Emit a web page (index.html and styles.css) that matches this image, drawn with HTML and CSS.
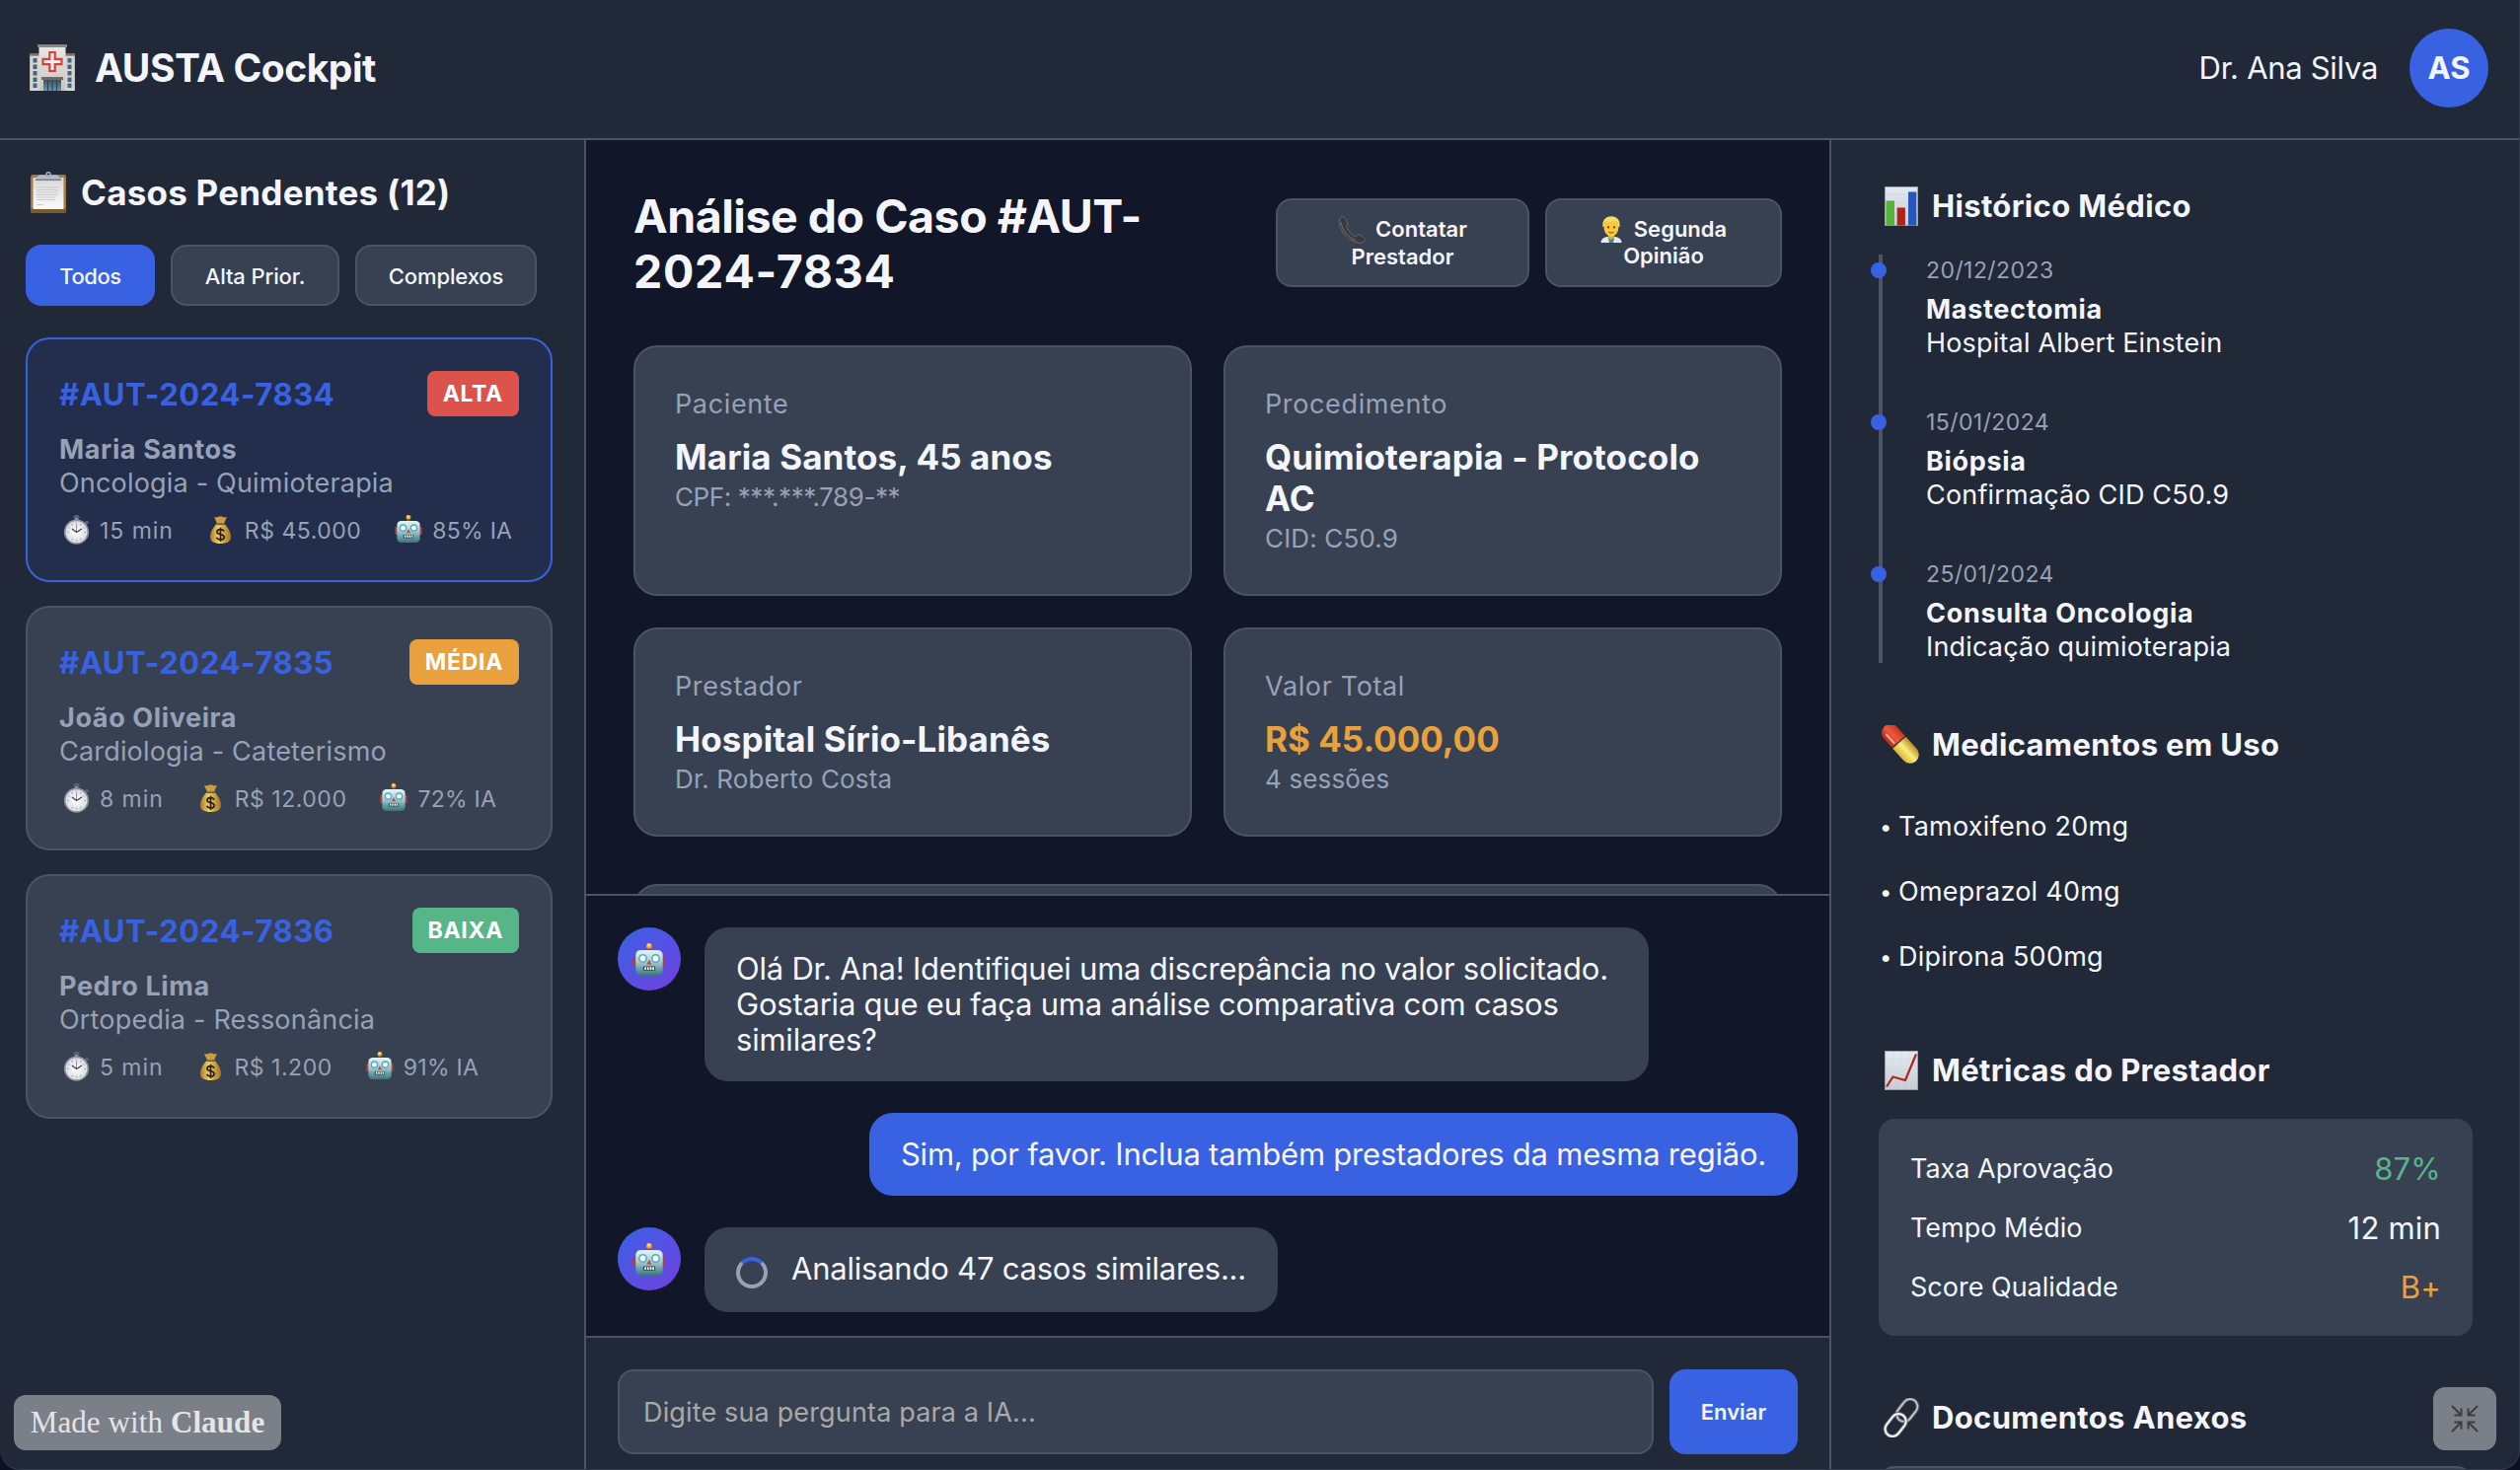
FILE: index.html
```html
<!DOCTYPE html>
<html lang="pt-BR">
<head>
<meta charset="utf-8">
<title>AUSTA Cockpit</title>
<link rel="stylesheet" href="styles.css">
</head>
<body>
<svg class="sprite" aria-hidden="true">
  <defs>
    <linearGradient id="g-wall" x1="0" y1="0" x2="0" y2="1"><stop offset="0" stop-color="#e9e7e3"/><stop offset="1" stop-color="#c9c6c1"/></linearGradient>
    <linearGradient id="g-glass" x1="0" y1="0" x2="0" y2="1"><stop offset="0" stop-color="#39536a"/><stop offset="1" stop-color="#6c93aa"/></linearGradient>
    <linearGradient id="g-paper" x1="0" y1="0" x2="0" y2="1"><stop offset="0" stop-color="#d9d9da"/><stop offset="1" stop-color="#fafafa"/></linearGradient>
    <linearGradient id="g-sheet" x1="0" y1="0" x2="0" y2="1"><stop offset="0" stop-color="#e3e9f2"/><stop offset="1" stop-color="#c6ccd2"/></linearGradient>
    <linearGradient id="g-robot" x1="0" y1="0" x2="0" y2="1"><stop offset="0" stop-color="#e6f6f5"/><stop offset=".45" stop-color="#a5cfd2"/><stop offset="1" stop-color="#37737f"/></linearGradient>
    <linearGradient id="g-gold" x1="0" y1="0" x2="1" y2="0"><stop offset="0" stop-color="#a97a24"/><stop offset=".4" stop-color="#f0cf6c"/><stop offset="1" stop-color="#a3741f"/></linearGradient>
    <linearGradient id="g-red" x1="0" y1="0" x2="1" y2="0"><stop offset="0" stop-color="#b32a17"/><stop offset=".5" stop-color="#ef5a3c"/><stop offset="1" stop-color="#c93720"/></linearGradient>
    <linearGradient id="g-yellow" x1="0" y1="0" x2="1" y2="0"><stop offset="0" stop-color="#d8b52e"/><stop offset=".5" stop-color="#fbee83"/><stop offset="1" stop-color="#b98f22"/></linearGradient>
    <radialGradient id="g-dial"><stop offset="0" stop-color="#ffffff"/><stop offset="1" stop-color="#dcdfe4"/></radialGradient>
    <radialGradient id="g-bulb" cx=".4" cy=".3"><stop offset="0" stop-color="#fff0a0"/><stop offset="1" stop-color="#e8951c"/></radialGradient>
  </defs>
  <symbol id="i-hospital" viewBox="0 0 46 47">
    <rect x="0" y="9" width="46" height="38" fill="#bdb9b2"/>
    <rect x="1" y="12" width="9" height="35" fill="#d8d5d0"/><rect x="36" y="12" width="9" height="35" fill="#d8d5d0"/>
    <rect x="0" y="9" width="46" height="2.5" fill="#77726b"/>
    <g fill="#3f6684"><rect x="3.5" y="14" width="4" height="4.5"/><rect x="3.5" y="20.5" width="4" height="4.5"/><rect x="3.5" y="27" width="4" height="4.5"/><rect x="3.5" y="33.5" width="4" height="4.5"/><rect x="3.5" y="39.5" width="4" height="4.5"/><rect x="38.5" y="14" width="4" height="4.5"/><rect x="38.5" y="20.5" width="4" height="4.5"/><rect x="38.5" y="27" width="4" height="4.5"/><rect x="38.5" y="33.5" width="4" height="4.5"/><rect x="38.5" y="39.5" width="4" height="4.5"/></g>
    <rect x="9.5" y="2" width="27" height="45" fill="url(#g-wall)"/>
    <rect x="8" y="0" width="30" height="3" fill="#8a857d"/>
    <rect x="12" y="33" width="22" height="3" fill="#6f6a63"/>
    <rect x="14" y="36" width="18" height="11" fill="url(#g-glass)"/>
    <path d="M18.500 36v11M23 36v11M27.500 36v11" stroke="#2b4252" stroke-width="1"/>
    <path d="M20.300 8h5.400v6.800h6.800v5.400h-6.800v6.800h-5.400v-6.800h-6.800v-5.400h6.800z" fill="#f1efec" stroke="#d8403d" stroke-width="2.200"/>
  </symbol>
  <symbol id="i-clipboard" viewBox="0 0 36 42">
    <rect x="0" y="3" width="36" height="39" rx="2.500" fill="#a07a42"/>
    <rect x="0" y="37" width="36" height="5" rx="2" fill="#7d5a29"/>
    <rect x="2.500" y="6" width="31" height="32" fill="url(#g-paper)"/>
    <path d="M6 16h22M6 18.500h22M6 21h22M6 23.500h22M6 26h20M6 28.500h19M6 11.500h4M6 33.500h7" stroke="#c3c3c5" stroke-width=".8"/>
    <path d="M5 8.500V6.500L9 3.500h18l4 3v2z" fill="#b6bdc6"/><path d="M5 8.300h26" stroke="#7f7f84" stroke-width="1.600"/>
    <circle cx="18" cy="2.800" r="2.100" fill="none" stroke="#9fb0c4" stroke-width="1.500"/>
  </symbol>
  <symbol id="i-stopwatch" viewBox="0 0 27 30">
    <rect x="10.500" y="0" width="6" height="5" rx="2" fill="#5a6170"/><rect x="12" y="3" width="3" height="4" fill="#868d99"/>
    <path d="M21.500 7.500l3-2 1.800 2.600-2.800 1.800z" fill="#5d6472"/>
    <circle cx="13.500" cy="17.200" r="12.600" fill="#8f959f"/>
    <circle cx="13.500" cy="17.200" r="10.900" fill="url(#g-dial)"/>
    <g stroke="#a2a7b0" stroke-width="1.100"><path d="M13.500 7.600v2M13.500 24.800v2M3.900 17.200h2M21.100 17.200h2M8.700 8.900l1 1.700M18.300 8.900l-1 1.700M5.200 12.400l1.700 1M21.800 12.400l-1.700 1M8.700 25.500l1-1.700M18.300 25.500l-1-1.700"/></g>
    <path d="M13.500 17.200V10" stroke="#d7755f" stroke-width="1"/>
    <path d="M9 14l4.500 3.500 5.500-3.500" fill="none" stroke="#3c4049" stroke-width="1.200"/>
  </symbol>
  <symbol id="i-bag" viewBox="0 0 21 28">
    <path d="M4 .8c2 1.200 3 .4 4.300 0 1.500-.5 2.800-.5 4.300 0s2.400 1.200 4.400 0l-3 7H7z" fill="#c89e45"/>
    <path d="M7 7.500h7c3 3 7 8 7 13.500C21 26 17 28 10.500 28S0 26 0 21C0 15.500 4 10.500 7 7.500z" fill="url(#g-gold)"/>
    <path d="M6.500 8.200h8" stroke="#7e5a1c" stroke-width="1.800"/>
    <path d="M14 15.600c-.6-1.300-2-1.900-3.500-1.900-2 0-3.500.9-3.500 2.500 0 3.600 7.200 1.500 7.200 5.200 0 1.700-1.700 2.600-3.700 2.600-1.800 0-3.300-.7-3.800-2.200M10.500 11.800v14" fill="none" stroke="#2b2112" stroke-width="1.700"/>
  </symbol>
  <symbol id="i-robot" viewBox="0 0 32 33">
    <circle cx="16" cy="3" r="2.900" fill="url(#g-bulb)"/>
    <path d="M13 7.500c0-2.500 6-2.500 6 0z" fill="#6a3f7f"/>
    <rect x="0" y="14" width="4" height="9.500" rx="1.500" fill="#b8403a"/><rect x="28" y="14" width="4" height="9.500" rx="1.500" fill="#b8403a"/>
    <rect x="2.300" y="7" width="27.400" height="26" rx="5" fill="url(#g-robot)"/>
    <circle cx="9.500" cy="15.500" r="3.700" fill="#fff" stroke="#4fabc6" stroke-width="1.600"/><circle cx="22.500" cy="15.500" r="3.700" fill="#fff" stroke="#4fabc6" stroke-width="1.600"/>
    <path d="M16 16.500l2.600 5h-5.200z" fill="#d9473c"/>
    <rect x="9.800" y="23.500" width="12.400" height="4.200" rx="1" fill="#2f4a50"/>
    <path d="M11.200 24.300h1.800v2.600h-1.800zM13.900 24.300h1.800v2.600h-1.800zM16.600 24.300h1.800v2.600h-1.800zM19.200 24.300h1.800v2.600h-1.800z" fill="#f4f4ee"/>
  </symbol>
  <symbol id="i-phone" viewBox="0 0 29 28">
    <path d="M4.500.8C2 1.500.8 4 1.300 7.500c1 8 8.200 17 18.700 19.500 3.200.8 6-.2 7.400-2.700.8-1.500-4.400-5.300-6.200-5.600-1.600-.2-1.500 2-3.300 2.200-2.200-.2-8-6-9.200-10-.2-1.500 1.300-1.400 1.200-3C9.800 6 7 .1 4.500.8z" fill="#3a3a3c" stroke="#68686b" stroke-width="1"/>
    <path d="M3 6c1 7.500 7 15.500 15 18.500" fill="none" stroke="#77777b" stroke-width="1"/>
  </symbol>
  <symbol id="i-doctor" viewBox="0 0 22 27">
    <path d="M.5 27c0-3.500 2.500-5.200 6.500-6h8c4 .8 6.500 2.500 6.500 6z" fill="#e6e9ec"/>
    <path d="M7.500 20.500h7L13 27H9z" fill="#2f93a6"/><path d="M8 18h6v4l-3 2-3-2z" fill="#e9a92c"/>
    <ellipse cx="11" cy="11.500" rx="7.400" ry="9.300" fill="#fbc83a"/>
    <path d="M2.500 11C1.500 4.500 5 .2 11 .2s9.500 4.300 8.500 10.800l-1.600-.5c0-3-1-4.500-2.400-5.500-3 1-7 1-9.500.3-1.200 1-1.900 2.400-1.900 5.200z" fill="#f3dc6b"/>
    <circle cx="8" cy="11.300" r="1.100" fill="#4c3214"/><circle cx="14" cy="11.300" r="1.100" fill="#4c3214"/>
    <path d="M8.500 16.300q2.500 1.300 5 0" fill="none" stroke="#8b4a17" stroke-width="1.100"/>
  </symbol>
  <symbol id="i-bars" viewBox="0 0 34 40">
    <rect x=".5" y=".5" width="33" height="39" fill="url(#g-sheet)" stroke="#9ca3ad"/>
    <path d="M1 8h32M1 16h32M1 24h32M1 32h32" stroke="#cfd6e0" stroke-width=".8"/>
    <rect x="1.500" y="14.500" width="8.500" height="25" fill="#55b437"/><rect x="12.700" y="21.500" width="8.200" height="18" fill="#b0231a"/><rect x="24" y="5.500" width="8.300" height="34" fill="#2458bd"/>
  </symbol>
  <symbol id="i-trend" viewBox="0 0 34 40">
    <rect x=".5" y=".5" width="33" height="39" fill="url(#g-sheet)" stroke="#9ca3ad"/>
    <path d="M1 8h32M1 16h32M1 24h32M1 32h32M9 1v38M17 1v38M25 1v38" stroke="#d3dae3" stroke-width=".6"/>
    <path d="M2 36.500L8.500 26.500l12.500 3.500L32 3.500" fill="none" stroke="#b4241d" stroke-width="2.200"/>
  </symbol>
  <symbol id="i-pill" viewBox="0 0 38 38">
    <g transform="rotate(-42 19 19)">
      <path d="M10.500 19V7.500a8.500 8.500 0 0 1 17 0V19z" fill="url(#g-red)" transform="translate(0 -4)"/>
      <path d="M10.500 15h17v15.500a8.500 8.500 0 0 1-17 0z" fill="url(#g-yellow)" transform="translate(0 1)"/>
      <path d="M15 2v11" stroke="#ffb09c" stroke-width="1.800" stroke-linecap="round"/>
    </g>
  </symbol>
  <symbol id="i-link" viewBox="0 0 40 40">
    <g fill="none" transform="rotate(38 20 20)">
      <rect x="12.500" y="-2" width="15" height="25" rx="7.500" stroke="#54575d" stroke-width="4"/>
      <rect x="12.500" y="-2" width="15" height="25" rx="7.500" stroke="#c9ccd2" stroke-width="1.800"/>
      <rect x="12.500" y="17" width="15" height="25" rx="7.500" stroke="#5d6066" stroke-width="4"/>
      <rect x="12.500" y="17" width="15" height="25" rx="7.500" stroke="#f2f4f6" stroke-width="2.200"/>
    </g>
  </symbol>
</svg>

<div class="app">
  <header class="topbar">
    <div class="brand"><svg class="icon-hospital"><use href="#i-hospital"/></svg><h1 class="brand-name">AUSTA Cockpit</h1></div>
    <div class="user"><span class="user-name">Dr. Ana Silva</span><span class="user-avatar">AS</span></div>
  </header>

  <main class="layout">
    <aside class="sidebar">
      <h2 class="side-title"><svg class="icon-clipboard"><use href="#i-clipboard"/></svg><span>Casos Pendentes (12)</span></h2>
      <div class="filters">
        <button class="filter filter-all is-active">Todos</button>
        <button class="filter filter-high">Alta Prior.</button>
        <button class="filter filter-complex">Complexos</button>
      </div>
      <div class="cases">
        <article class="case is-selected">
          <div class="case-head"><span class="case-id">#AUT-2024-7834</span><span class="badge badge-high">ALTA</span></div>
          <div class="case-name">Maria Santos</div>
          <div class="case-kind">Oncologia - Quimioterapia</div>
          <div class="meta">
            <span class="meta-item meta-time"><svg class="icon-watch"><use href="#i-stopwatch"/></svg>15 min</span>
            <span class="meta-item meta-cost"><svg class="icon-bag"><use href="#i-bag"/></svg>R$ 45.000</span>
            <span class="meta-item meta-ai"><svg class="icon-bot"><use href="#i-robot"/></svg>85% IA</span>
          </div>
        </article>
        <article class="case">
          <div class="case-head"><span class="case-id">#AUT-2024-7835</span><span class="badge badge-mid">MÉDIA</span></div>
          <div class="case-name">João Oliveira</div>
          <div class="case-kind">Cardiologia - Cateterismo</div>
          <div class="meta">
            <span class="meta-item meta-time"><svg class="icon-watch"><use href="#i-stopwatch"/></svg>8 min</span>
            <span class="meta-item meta-cost"><svg class="icon-bag"><use href="#i-bag"/></svg>R$ 12.000</span>
            <span class="meta-item meta-ai"><svg class="icon-bot"><use href="#i-robot"/></svg>72% IA</span>
          </div>
        </article>
        <article class="case">
          <div class="case-head"><span class="case-id">#AUT-2024-7836</span><span class="badge badge-low">BAIXA</span></div>
          <div class="case-name">Pedro Lima</div>
          <div class="case-kind">Ortopedia - Ressonância</div>
          <div class="meta">
            <span class="meta-item meta-time"><svg class="icon-watch"><use href="#i-stopwatch"/></svg>5 min</span>
            <span class="meta-item meta-cost"><svg class="icon-bag"><use href="#i-bag"/></svg>R$ 1.200</span>
            <span class="meta-item meta-ai"><svg class="icon-bot"><use href="#i-robot"/></svg>91% IA</span>
          </div>
        </article>
      </div>
    </aside>

    <section class="center">
      <div class="analysis">
        <div class="analysis-head">
          <h2 class="analysis-title">Análise do Caso #AUT-<br><span class="analysis-number">2024-7834</span></h2>
          <div class="actions">
            <button class="action action-contact"><span class="action-line"><svg class="icon-phone"><use href="#i-phone"/></svg>Contatar</span><span>Prestador</span></button>
            <button class="action action-opinion"><span class="action-line"><svg class="icon-doctor"><use href="#i-doctor"/></svg>Segunda</span><span>Opinião</span></button>
          </div>
        </div>
        <div class="facts">
          <div class="fact"><div class="fact-label">Paciente</div><div class="fact-value">Maria Santos, 45 anos</div><div class="fact-note fact-note-id">CPF: ***.***.789-**</div></div>
          <div class="fact"><div class="fact-label">Procedimento</div><div class="fact-value">Quimioterapia - Protocolo AC</div><div class="fact-note">CID: C50.9</div></div>
          <div class="fact"><div class="fact-label">Prestador</div><div class="fact-value">Hospital Sírio-Libanês</div><div class="fact-note">Dr. Roberto Costa</div></div>
          <div class="fact"><div class="fact-label">Valor Total</div><div class="fact-value fact-value-warn">R$ 45.000,00</div><div class="fact-note">4 sessões</div></div>
        </div>
        <div class="fact fact-next"></div>
      </div>

      <div class="chat">
        <div class="msg"><span class="bot"><svg class="icon-bot-lg"><use href="#i-robot"/></svg></span>
          <div class="bubble bubble-wide">Olá Dr. Ana! Identifiquei uma discrepância no valor solicitado.<br>Gostaria que eu faça uma análise comparativa com casos<br>similares?</div></div>
        <div class="msg msg-user"><div class="bubble bubble-user">Sim, por favor. Inclua também prestadores da mesma região.</div></div>
        <div class="msg"><span class="bot"><svg class="icon-bot-lg"><use href="#i-robot"/></svg></span>
          <div class="bubble bubble-busy"><span class="spinner"></span><span>Analisando 47 casos similares...</span></div></div>
      </div>

      <div class="composer"><div class="composer-input">Digite sua pergunta para a IA...</div><button class="composer-send">Enviar</button></div>
    </section>

    <aside class="details">
      <h3 class="section-title"><svg class="icon-section"><use href="#i-bars"/></svg>Histórico Médico</h3>
      <div class="timeline">
        <div class="event"><div class="event-date">20/12/2023</div><div class="event-name">Mastectomia</div><div class="event-text">Hospital Albert Einstein</div></div>
        <div class="event"><div class="event-date">15/01/2024</div><div class="event-name">Biópsia</div><div class="event-text">Confirmação CID C50.9</div></div>
        <div class="event"><div class="event-date">25/01/2024</div><div class="event-name">Consulta Oncologia</div><div class="event-text">Indicação quimioterapia</div></div>
      </div>
      <h3 class="section-title section-meds"><svg class="icon-section"><use href="#i-pill"/></svg>Medicamentos em Uso</h3>
      <div class="meds">
        <div class="med"><span class="bullet">•</span>Tamoxifeno 20mg</div>
        <div class="med"><span class="bullet">•</span>Omeprazol 40mg</div>
        <div class="med"><span class="bullet">•</span>Dipirona 500mg</div>
      </div>
      <h3 class="section-title section-metrics"><svg class="icon-section"><use href="#i-trend"/></svg>Métricas do Prestador</h3>
      <div class="metrics">
        <div class="metric"><span>Taxa Aprovação</span><span class="metric-value metric-good">87%</span></div>
        <div class="metric"><span>Tempo Médio</span><span class="metric-value">12 min</span></div>
        <div class="metric"><span>Score Qualidade</span><span class="metric-value metric-warn">B+</span></div>
      </div>
      <h3 class="section-title section-docs"><svg class="icon-section"><use href="#i-link"/></svg>Documentos Anexos</h3>
      <div class="doc"></div>
    </aside>
  </main>

  <div class="made-with">Made with <b>Claude</b></div>
  <button class="collapse" aria-label="Sair da tela cheia"><svg class="icon-collapse" viewBox="0 0 28 28" fill="none" stroke="#3d3d3a" stroke-width="2"><path d="M1 1l9.500 9.500M10.500 3.500v7h-7M27 1l-9.500 9.500M17.500 3.500v7h7M1 27l9.500-9.500M10.500 24.500v-7h-7M27 27l-9.500-9.500M17.500 24.500v-7h7"/></svg></button>
</div>
</body>
</html>
```
FILE: styles.css
```css
* { box-sizing: border-box; margin: 0; padding: 0; }
body { width: 2554px; height: 1490px; overflow: hidden; background: #0c1122; color: #f3f5fb; font-family: Inter, "Liberation Sans", sans-serif; }
button { font: inherit; color: inherit; border: 0; }
svg { display: block; flex: none; }
.sprite { position: absolute; width: 0; height: 0; }
.app { position: relative; width: 2554px; height: 1490px; display: flex; flex-direction: column; overflow: hidden; background: #111628; border-radius: 0 0 20px 20px; }
.app::after { content: ""; position: absolute; inset: 0; border: solid #343c4b; border-width: 0 1px 1px 0; border-radius: 0 0 20px 20px; pointer-events: none; }

.topbar { height: 142px; flex: none; display: flex; align-items: center; justify-content: space-between; padding: 0 32px 3px 30px; background: #212938; border-bottom: 2px solid #4a5465; }
.brand { display: flex; align-items: center; gap: 20px; }
.brand-name { font-size: 39px; font-weight: 700; line-height: 48px; letter-spacing: -.49px; }
.icon-hospital { width: 46px; height: 47px; }
.user { display: flex; align-items: center; gap: 32px; }
.user-name { font-size: 31px; line-height: 40px; letter-spacing: -.3px; }
.user-avatar { width: 80px; height: 80px; border-radius: 50%; background: #3962e3; display: flex; align-items: center; justify-content: center; font-size: 31px; font-weight: 700; }

.layout { flex: 1; min-height: 0; display: grid; grid-template-columns: 594px 1260px 700px; }

.sidebar { background: #212938; border-right: 2px solid #4a5465; padding: 31px 32px 0 26px; }
.side-title { display: flex; align-items: center; gap: 15px; padding-left: 5px; height: 44px; font-size: 35px; font-weight: 700; line-height: 44px; letter-spacing: .24px; }
.icon-clipboard { width: 36px; height: 42px; }
.filters { display: flex; gap: 16px; margin-top: 31px; }
.filter { height: 62px; padding-top: 2px; border: 2px solid #4a5465; border-radius: 16px; background: #374152; font-size: 22px; font-weight: 500; letter-spacing: -.12px; }
.filter-all { width: 131px; letter-spacing: -.45px; }
.filter-high { width: 171px; }
.filter-complex { width: 184px; }
.filter.is-active { background: #3962e3; border-color: #3962e3; }
.cases { display: flex; flex-direction: column; gap: 24px; margin-top: 32px; }
.case { height: 248px; padding: 32px; border: 2px solid #4a5465; border-radius: 24px; background: #374152; }
.case.is-selected { background: #222e4b; border-color: #3962e3; }
.case-head { display: flex; align-items: center; justify-content: space-between; height: 46px; }
.case-id { color: #3962e3; font-size: 31px; font-weight: 700; letter-spacing: .59px; }
.badge { height: 46px; padding: 0 16px; border-radius: 8px; color: #fff; font-size: 23px; font-weight: 700; line-height: 46px; letter-spacing: .7px; }
.badge-high { background: #de524c; }
.badge-mid { background: #e8a13c; }
.badge-low { background: #56b688; }
.case-name { margin-top: 17px; color: #97a2b6; font-size: 27px; font-weight: 700; line-height: 34px; letter-spacing: .62px; }
.case-kind { color: #97a2b6; font-size: 27px; line-height: 34px; letter-spacing: .19px; }
.meta { display: flex; gap: 31px; margin-top: 14px; color: #97a2b6; font-size: 23px; line-height: 34px; }
.meta-item { display: flex; align-items: center; }
.meta-time { letter-spacing: .95px; }
.meta-cost { letter-spacing: .52px; }
.meta-ai { letter-spacing: .27px; }
.icon-watch { width: 27px; height: 30px; margin: 0 10px 2px 4px; }
.icon-bag { width: 21px; height: 28px; margin: 0 14px 2px 6px; }
.icon-bot { width: 28px; height: 28px; margin: 0 10px 4px 3px; }

.center { display: flex; flex-direction: column; min-height: 0; }
.analysis { height: 764px; flex: none; overflow: hidden; padding: 48px 48px 0; }
.analysis-head { display: flex; align-items: center; justify-content: space-between; height: 112px; }
.analysis-title { padding-top: 2px; font-size: 46.5px; font-weight: 700; line-height: 56px; letter-spacing: -.48px; }
.analysis-number { letter-spacing: .73px; }
.actions { display: flex; gap: 16px; }
.action { display: flex; flex-direction: column; align-items: center; justify-content: center; height: 90px; border: 2px solid #4a5465; border-radius: 16px; background: #374152; font-size: 22px; font-weight: 600; line-height: 27px; }
.action-contact { width: 257px; }
.action-opinion { width: 240px; }
.action-line { display: flex; align-items: center; gap: 9px; }
.action-opinion .action-line { gap: 12px; }
.icon-phone { width: 29px; height: 28px; }
.icon-doctor { width: 22px; height: 27px; }
.facts { display: grid; grid-template-columns: 1fr 1fr; gap: 32px; margin-top: 48px; }
.fact { padding: 41px 40px 40px; border: 2px solid #4a5465; border-radius: 24px; background: #374152; }
.fact-label { color: #97a2b6; font-size: 27px; line-height: 34px; letter-spacing: .63px; }
.fact-value { margin-top: 15px; font-size: 35px; font-weight: 700; line-height: 42px; letter-spacing: .1px; }
.fact-value-warn { color: #e8a13c; letter-spacing: 0; }
.fact-note { margin-top: 4px; color: #97a2b6; font-size: 26px; line-height: 32px; letter-spacing: .15px; }
.fact-note-id { letter-spacing: -.41px; }
.fact-next { height: 200px; margin-top: 48px; }

.chat { height: 448px; flex: none; overflow: hidden; border-top: 2px solid #4a5465; padding: 32px; display: flex; flex-direction: column; gap: 32px; }
.msg { display: flex; align-items: flex-start; gap: 24px; flex: none; }
.msg-user { justify-content: flex-end; }
.bot { width: 64px; height: 64px; border-radius: 50%; background: linear-gradient(135deg, #3962e3, #7040e0); display: flex; align-items: center; justify-content: center; flex: none; }
.icon-bot-lg { width: 32px; height: 33px; }
.bubble { padding: 24px 32px; border-radius: 24px; background: #374152; font-size: 31px; line-height: 36px; letter-spacing: -.22px; white-space: nowrap; }
.bubble-wide { width: 957px; }
.bubble-user { background: #3962e3; }
.bubble-busy { display: flex; height: 86px; }
.spinner { width: 32px; height: 32px; margin: 6px 24px 0 0; border: 4px solid #97a2b6; border-top-color: #3962e3; border-radius: 50%; }
.composer { flex: 1; display: flex; align-items: flex-start; gap: 16px; padding: 32px 32px 0; background: #212938; border-top: 2px solid #4a5465; }
.composer-input { flex: 1; height: 86px; padding: 0 24px; border: 2px solid #4a5465; border-radius: 16px; background: #374152; color: #a9a9a9; font-size: 27px; line-height: 84px; letter-spacing: .15px; }
.composer-send { width: 130px; height: 86px; border-radius: 16px; background: #3962e3; font-size: 22px; font-weight: 600; }

.details { background: #212938; border-left: 2px solid #4a5465; padding: 47px 48px 0; overflow: hidden; }
.section-title { display: flex; align-items: center; gap: 10px; height: 40px; padding-left: 2px; font-size: 31px; font-weight: 700; line-height: 40px; letter-spacing: .34px; }
.icon-section { width: 42px; height: 40px; }
.timeline { height: 414px; margin-top: 29px; padding: 2px 0 0 44px; border-left: 4px solid #4a5465; display: flex; flex-direction: column; gap: 50px; }
.event { position: relative; height: 104px; font-size: 27px; line-height: 34px; }
.event::before { content: ""; position: absolute; left: -56px; top: 6px; width: 16px; height: 16px; border-radius: 50%; background: #3962e3; }
.event-date { margin-bottom: 9px; color: #97a2b6; font-size: 23px; line-height: 28px; letter-spacing: .43px; }
.event-name { font-weight: 700; letter-spacing: .68px; }
.event-text { letter-spacing: .18px; }
.section-meds { margin-top: 63px; }
.meds { display: flex; flex-direction: column; gap: 32px; margin-top: 46px; padding-left: 1px; font-size: 27px; line-height: 34px; letter-spacing: .25px; }
.med { display: flex; }
.bullet { width: 19px; font-size: 22px; }
.section-metrics { margin-top: 78px; }
.metrics { display: flex; flex-direction: column; gap: 24px; height: 220px; margin-top: 29px; padding: 32px; border-radius: 16px; background: #374152; }
.metric { display: flex; align-items: center; justify-content: space-between; height: 36px; font-size: 27px; }
.metric-value { font-size: 31px; letter-spacing: .2px; }
.metric-good { color: #56b688; }
.metric-warn { color: #e8a13c; }
.section-docs { margin-top: 63px; }
.doc { height: 90px; margin-top: 29px; border: 2px solid #4a5465; border-radius: 16px; background: #374152; }

.made-with { position: absolute; left: 14px; top: 1414px; width: 271px; height: 56px; border-radius: 12px; background: #7a7f88; color: #e3e5e8; font: 31px/56px "Liberation Serif", serif; text-align: center; letter-spacing: .1px; }
.collapse { position: absolute; left: 2466px; top: 1406px; width: 64px; height: 64px; border-radius: 12px; background: #7a7f88; display: flex; align-items: center; justify-content: center; }
.icon-collapse { width: 28px; height: 28px; }
```
